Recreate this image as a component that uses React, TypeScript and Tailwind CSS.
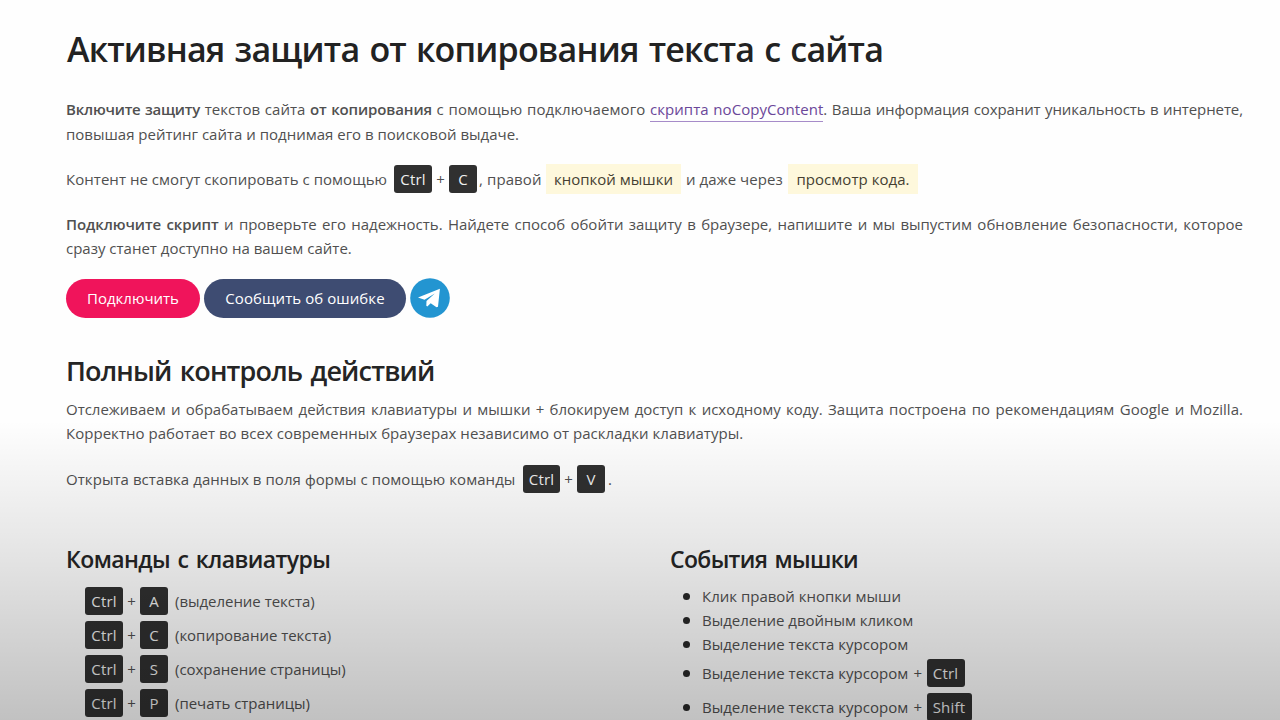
import type { ReactNode } from "react";

function Key({ children, className = "" }: { children: ReactNode; className?: string }) {
  return (
    <kbd className={`flex h-7 shrink-0 items-center justify-center rounded-[3px] bg-[#303030] pb-px font-['Open_Sans',sans-serif] text-[15px] font-medium tracking-[0.2px] text-[#efefef] ${className}`}>
      {children}
    </kbd>
  );
}

function Mark({ children, className }: { children: ReactNode; className: string }) {
  return (
    <mark className={`flex h-[30px] shrink-0 items-center justify-center bg-[#fef8dc] text-[#453f32] ${className}`}>
      {children}
    </mark>
  );
}

const shortcuts = [
  ["A", "(выделение текста)"],
  ["C", "(копирование текста)"],
  ["S", "(сохранение страницы)"],
  ["P", "(печать страницы)"],
];

function Bullet() {
  return <span className="ml-[14px] mr-3 size-[7px] shrink-0 rounded-full bg-[#282828]" />;
}

export default function App() {
  return (
    <div className="relative h-[720px] w-[1280px] overflow-hidden bg-[#fefefe] pl-[66px] pr-[37px] font-['Open_Sans','Noto_Sans',sans-serif] text-[15px] leading-6 text-[#505050] whitespace-nowrap">
      <h1 className="flex h-[98px] items-center pb-px pl-px text-[34px] font-semibold tracking-[-0.8px] [word-spacing:2px] text-[#222]">
        Активная защита от копирования текста с сайта
      </h1>
      <div>
        <p className="h-[24px] leading-[23px] tracking-[-0.02px] [text-align-last:justify]">
          <b className="font-semibold tracking-[-0.22px]">Включите защиту</b> <span className="tracking-[0.05px]">текстов сайта</span> <b className="font-semibold tracking-[-0.12px]">от копирования</b> <span className="tracking-[0.1px]">с помощью подключаемого</span>{" "}
          <a className="border-b border-[#a68bc9] pb-[2px] tracking-[0.05px] text-[#6b4799]">скрипта noCopyContent</a>. <span className="tracking-[-0.1px]">Ваша информация сохранит уникальность в интернете,</span>
        </p>
        <p className="h-[25px]">повышая рейтинг сайта и поднимая его в поисковой выдаче.</p>
      </div>
      <p className="mt-[17px] flex h-[30px] items-center">
        <span className="w-[328px] tracking-[0.04px]">Контент не смогут скопировать с помощью</span>
        <Key className="w-[38px]">Ctrl</Key>
        <span className="w-[17px] text-center">+</span>
        <Key className="w-7">C</Key>
        <span className="w-[69px] pl-[2px] tracking-[0.1px]">, правой</span>
        <Mark className="w-[135px]">кнопкой мышки</Mark>
        <span className="w-[107px] pl-[5px] tracking-[0.05px]">и даже через</span>
        <Mark className="w-[130px] tracking-[0.05px]">просмотр кода.</Mark>
      </p>
      <div className="mt-[18px]">
        <p className="h-[24px] tracking-[-0.02px] [text-align-last:justify]">
          <b className="font-semibold tracking-[-0.08px]">Подключите скрипт</b> и проверьте его надежность. Найдете способ обойти защиту в браузере, напишите и мы выпустим <span className="tracking-[0.04px]">обновление безопасности, которое</span>
        </p>
        <p className="h-[25px]">сразу станет доступно на вашем сайте.</p>
      </div>
      <div className="mt-[17px] flex h-10 items-start gap-1 text-[15px] font-medium text-white">
        <button className="mt-[0.5px] h-[39px] w-[134px] rounded-full bg-[#f0145b]">Подключить</button>
        <button className="mt-[0.5px] h-[39px] w-[202px] rounded-full bg-[#3e4c72] tracking-[0.07px]">Сообщить об ошибке</button>
        <button className="size-10" aria-label="Telegram">
          <svg viewBox="0 0 40 40" className="size-10">
            <circle cx="20" cy="20" r="19.8" fill="#2395d1" />
            <path d="M8 19.5 29.9 10.8 28 28.7 26.5 29.3 20.7 25.2 17.3 28.4 16.3 27.8 16.5 23 24.8 15.6 14.5 21.8Z" fill="white" />
          </svg>
        </button>
      </div>
      <h2 className="mt-[34px] flex h-[37px] items-center text-[27px] font-semibold tracking-[-0.82px] [word-spacing:2px] text-[#252525]">Полный контроль действий</h2>
      <div className="mt-[9px]">
        <p className="h-[24px] leading-[23px] tracking-[-0.02px] [text-align-last:justify]">
          Отслеживаем и обрабатываем действия клавиатуры и мышки + блокируем доступ к исходному коду. <span className="tracking-[0.03px]">Защита построена по рекомендациям Google и Mozilla.</span>
        </p>
        <p className="h-[25px] leading-[23px] tracking-[0.03px]">Корректно работает во всех современных браузерах независимо от раскладки клавиатуры.</p>
      </div>
      <p className="mt-[17px] flex h-[30px] items-center">
        <span className="w-[457px] tracking-[0.06px]">Открыта вставка данных в поля формы с помощью команды</span>
        <Key className="w-[37px]">Ctrl</Key>
        <span className="w-[17px] text-center">+</span>
        <Key className="w-7">V</Key>
        <span className="pl-[3px]">.</span>
      </p>
      <div className="mt-[48px] flex">
        <section className="w-[603px]">
          <h3 className="flex h-[34px] items-center text-[23px] font-semibold tracking-[-0.56px] [word-spacing:2px] text-[#252525]">Команды с клавиатуры</h3>
          <ul className="mt-[8px]">
            {shortcuts.map(([key, label]) => (
              <li key={key} className="flex h-[34px] items-center pl-[19px]">
                <Key className="w-[38px]">Ctrl</Key>
                <span className="w-[17px] text-center">+</span>
                <Key className="w-7">{key}</Key>
                <span className="pl-[7px] tracking-[-0.03px]">{label}</span>
              </li>
            ))}
          </ul>
        </section>
        <section>
          <h3 className="flex h-[34px] items-center pl-px text-[23px] font-semibold tracking-[-0.66px] [word-spacing:2px] text-[#252525]">События мышки</h3>
          <ul className="mt-[8px]">
            <li className="flex h-6 items-center"><Bullet />Клик правой кнопки мыши</li>
            <li className="flex h-6 items-center tracking-[-0.03px]"><Bullet />Выделение двойным кликом</li>
            <li className="flex h-6 items-center"><Bullet />Выделение текста курсором</li>
            <li className="flex h-[34px] items-center"><Bullet /><span className="w-[220.5px]">Выделение текста курсором <span className="pl-[1.5px]">+</span></span><Key className="ml-1 w-[38px]">Ctrl</Key></li>
            <li className="flex h-[34px] items-center"><Bullet /><span className="w-[220.5px]">Выделение текста курсором <span className="pl-[1.5px]">+</span></span><Key className="ml-1 w-[45px]">Shift</Key></li>
          </ul>
        </section>
      </div>
      <div className="pointer-events-none absolute inset-x-0 bottom-0 h-[300px] bg-gradient-to-b from-black/0 via-black/9 via-40% to-black/24" />
    </div>
  );
}
